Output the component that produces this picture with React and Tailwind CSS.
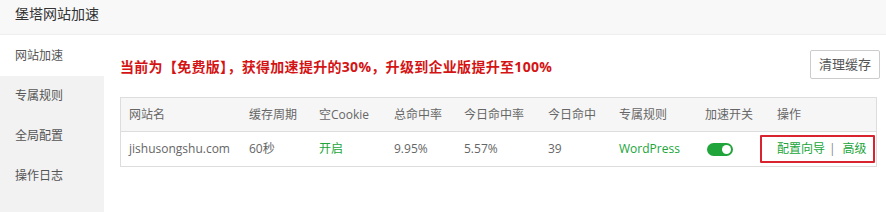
import React from 'react';

const FONT = { fontFamily: '"Open Sans", "Noto Sans CJK SC", sans-serif' };

const navItems = ['网站加速', '专属规则', '全局配置', '操作日志'];

const columns = ['网站名', '缓存周期', '空Cookie', '总命中率', '今日命中率', '今日命中', '专属规则', '加速开关', '操作'];

const gridCols = 'grid grid-cols-[120px_70px_75px_70px_84px_71px_86px_72px_1fr]';

function Toggle() {
  return (
    <span className="inline-flex items-center justify-end w-[26px] h-[13px] rounded-full bg-[#20a53a] pr-[2px]">
      <span className="block w-[9px] h-[9px] rounded-full bg-white" />
    </span>
  );
}

export default function App() {
  return (
    <div className="w-[886px] h-[212px] flex flex-col bg-white overflow-hidden" style={FONT}>
      {/* title bar */}
      <div className="h-[35px] shrink-0 bg-[#f8f8f8] border-b border-[#eeeeee] px-[15px] text-[14px] leading-[28px] text-[#333]">
        堡塔网站加速
      </div>

      <div className="flex flex-1">
        {/* left nav */}
        <div className="w-[104px] shrink-0 bg-[#f2f2f2]">
          {navItems.map((item, i) => (
            <div
              key={item}
              className={
                i === 0
                  ? 'h-[41px] pl-[15px] flex items-center text-[12px] text-[#555] bg-white'
                  : 'h-[40px] pl-[15px] flex items-center text-[12px] text-[#555]'
              }
            >
              {item}
            </div>
          ))}
        </div>

        {/* main */}
        <div className="flex-1 pl-[16px] pr-[6px] pt-[15px]">
          <div className="flex items-center justify-between">
            <div className="pt-[3px] text-[14px] font-bold tracking-[0.3px] text-[#d41414]">
              当前为【免费版】，获得加速提升的30%，升级到企业版提升至100%
            </div>
            <button className="h-[29px] px-[8px] border border-[#cccccc] rounded-[2px] bg-white text-[13px] text-[#555]">
              清理缓存
            </button>
          </div>

          <div className="mt-[18px] mr-[3px] border border-[#dddddd] text-[12px] text-[#666]">
            <div className={`${gridCols} h-[34px] items-center bg-[#f6f6f6] border-b border-[#dddddd]`}>
              {columns.map((c) => (
                <div key={c} className="pl-[8px] whitespace-nowrap">{c}</div>
              ))}
            </div>
            <div className={`${gridCols} h-[34px] items-center`}>
              <div className="pl-[8px]">jishusongshu.com</div>
              <div className="pl-[8px]">60秒</div>
              <div className="pl-[8px] text-[#20a53a]">开启</div>
              <div className="pl-[8px]">9.95%</div>
              <div className="pl-[8px]">5.57%</div>
              <div className="pl-[8px]">39</div>
              <div className="pl-[8px] text-[#20a53a]">WordPress</div>
              <div className="pl-[10px] flex items-center"><Toggle /></div>
              <div className="relative h-full pl-[8px] flex items-center whitespace-nowrap text-[#20a53a]">
                <span>配置向导</span>
                <span className="ml-[4px] mr-[7px] text-[#888]">|</span>
                <span>高级</span>
                <span className="absolute left-[-9px] right-[1px] top-[3px] bottom-[3px] border-2 border-[#d9232e] rounded-[1px]" />
              </div>
            </div>
          </div>
        </div>
      </div>
    </div>
  );
}
